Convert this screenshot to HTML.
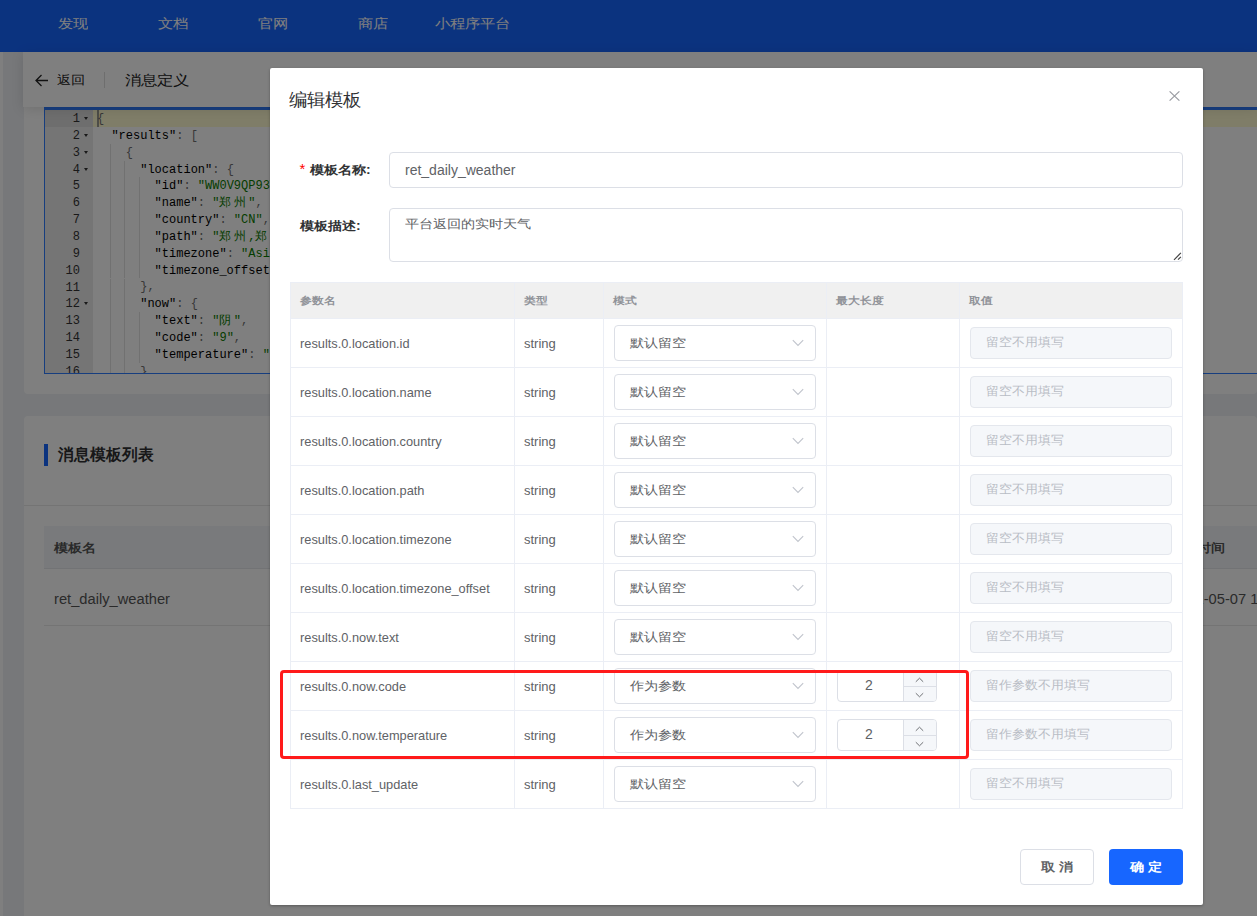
<!DOCTYPE html>
<html><head><meta charset="utf-8">
<style>
*{box-sizing:border-box;margin:0;padding:0}
html,body{width:1257px;height:916px;overflow:hidden}
body{position:relative;background:#eef0f4;font-family:"Liberation Sans",sans-serif;color:#333}
.abs{position:absolute;white-space:nowrap}
.c{display:inline-block;transform:scaleY(.85);font-weight:500}
#strip{left:0;top:52px;width:3px;height:864px;background:#fff}
#nav{left:0;top:0;width:1257px;height:52px;background:#1766ff}
#nav span{position:absolute;top:14px;font-size:15px;line-height:20px;color:#fff}
#hcard{left:23px;top:52px;width:1234px;height:55px;background:#fff;z-index:1;box-shadow:0 2px 12px rgba(0,0,0,.12)}
#hcard .t{position:absolute;line-height:20px;color:#222}
#ecard{left:24px;top:107px;width:1233px;height:287px;background:#fff;border-radius:0 0 4px 4px}
#editor{left:44px;top:107px;width:1213px;height:267px;border:1px solid #2f7cff;border-top-width:3px;border-right:none;background:#fff;overflow:hidden}
#gutter{left:0;top:0;width:48px;height:100%;background:#ebebeb}
.code{position:absolute;left:0;top:0;font-family:"Liberation Mono",monospace;font-size:12px;line-height:16.85px;white-space:pre;color:#000}
.ln{position:absolute;left:0;width:35px;text-align:right;font-family:"Liberation Mono",monospace;font-size:12px;line-height:16.85px;color:#333}
.fold{position:absolute;left:39px;width:0;height:0;border-left:2.7px solid transparent;border-right:2.7px solid transparent;border-top:3.3px solid #333}
.k{color:#000}.p{color:#707070}.s{color:#0a7a00}
.ig{position:absolute;width:1px;background:#e2e2e2}
#lcard{left:24px;top:416px;width:1233px;height:500px;background:#fff;border-radius:4px 4px 0 0}
#mask{left:0;top:0;width:1257px;height:916px;background:rgba(0,0,0,.5);z-index:2}
#modal{left:270px;top:68px;width:933px;height:837px;background:#fff;border-radius:2px;z-index:3;box-shadow:0 1px 3px rgba(0,0,0,.3)}
</style></head><body>
<div id="strip" class="abs"></div>
<div id="nav" class="abs"><span class="c" style="left:58px">发现</span><span class="c" style="left:158px">文档</span><span class="c" style="left:258px">官网</span><span class="c" style="left:358px">商店</span><span class="c" style="left:435px">小程序平台</span></div>
<div id="hcard" class="abs">
  <svg class="abs" style="left:12px;top:22px" width="14" height="13" viewBox="0 0 14 13"><path d="M13 6.5H1.5M6.5 1L1 6.5L6.5 12" fill="none" stroke="#222" stroke-width="1.3"/></svg>
  <span class="t c" style="left:34px;top:18px;font-size:14px">返回</span>
  <div class="abs" style="left:81px;top:20px;width:1px;height:16px;background:#ddd"></div>
  <span class="t c" style="left:102px;top:19px;font-size:16px">消息定义</span>
</div>
<div id="ecard" class="abs"></div>
<div id="editor" class="abs">
<div id="gutter" class="abs"></div>
<div class="abs" style="left:0;top:0;width:48px;height:16.85px;background:#dcdcdc"></div>
<div class="abs" style="left:48px;top:0;width:1200px;height:16.85px;background:#fffbd1"></div>
<div class="abs" style="left:52px;top:0;width:1.5px;height:16.85px;background:#9a9a90"></div>
<div class="ln" style="top:1.00px">1</div>
<div class="fold" style="top:7.00px"></div>
<div class="ln" style="top:17.85px">2</div>
<div class="fold" style="top:23.85px"></div>
<div class="ln" style="top:34.70px">3</div>
<div class="fold" style="top:40.70px"></div>
<div class="ln" style="top:51.55px">4</div>
<div class="fold" style="top:57.55px"></div>
<div class="ln" style="top:68.40px">5</div>
<div class="ln" style="top:85.25px">6</div>
<div class="ln" style="top:102.10px">7</div>
<div class="ln" style="top:118.95px">8</div>
<div class="ln" style="top:135.80px">9</div>
<div class="ln" style="top:152.65px">10</div>
<div class="ln" style="top:169.50px">11</div>
<div class="ln" style="top:186.35px">12</div>
<div class="fold" style="top:192.35px"></div>
<div class="ln" style="top:203.20px">13</div>
<div class="ln" style="top:220.05px">14</div>
<div class="ln" style="top:236.90px">15</div>
<div class="ln" style="top:253.75px">16</div>
<div class="ig" style="left:65.0px;top:33.70px;height:16.85px"></div>
<div class="ig" style="left:65.0px;top:50.55px;height:16.85px"></div>
<div class="ig" style="left:79.4px;top:50.55px;height:16.85px"></div>
<div class="ig" style="left:65.0px;top:67.40px;height:16.85px"></div>
<div class="ig" style="left:79.4px;top:67.40px;height:16.85px"></div>
<div class="ig" style="left:93.8px;top:67.40px;height:16.85px"></div>
<div class="ig" style="left:65.0px;top:84.25px;height:16.85px"></div>
<div class="ig" style="left:79.4px;top:84.25px;height:16.85px"></div>
<div class="ig" style="left:93.8px;top:84.25px;height:16.85px"></div>
<div class="ig" style="left:65.0px;top:101.10px;height:16.85px"></div>
<div class="ig" style="left:79.4px;top:101.10px;height:16.85px"></div>
<div class="ig" style="left:93.8px;top:101.10px;height:16.85px"></div>
<div class="ig" style="left:65.0px;top:117.95px;height:16.85px"></div>
<div class="ig" style="left:79.4px;top:117.95px;height:16.85px"></div>
<div class="ig" style="left:93.8px;top:117.95px;height:16.85px"></div>
<div class="ig" style="left:65.0px;top:134.80px;height:16.85px"></div>
<div class="ig" style="left:79.4px;top:134.80px;height:16.85px"></div>
<div class="ig" style="left:93.8px;top:134.80px;height:16.85px"></div>
<div class="ig" style="left:65.0px;top:151.65px;height:16.85px"></div>
<div class="ig" style="left:79.4px;top:151.65px;height:16.85px"></div>
<div class="ig" style="left:93.8px;top:151.65px;height:16.85px"></div>
<div class="ig" style="left:65.0px;top:168.50px;height:16.85px"></div>
<div class="ig" style="left:79.4px;top:168.50px;height:16.85px"></div>
<div class="ig" style="left:65.0px;top:185.35px;height:16.85px"></div>
<div class="ig" style="left:79.4px;top:185.35px;height:16.85px"></div>
<div class="ig" style="left:65.0px;top:202.20px;height:16.85px"></div>
<div class="ig" style="left:79.4px;top:202.20px;height:16.85px"></div>
<div class="ig" style="left:93.8px;top:202.20px;height:16.85px"></div>
<div class="ig" style="left:65.0px;top:219.05px;height:16.85px"></div>
<div class="ig" style="left:79.4px;top:219.05px;height:16.85px"></div>
<div class="ig" style="left:93.8px;top:219.05px;height:16.85px"></div>
<div class="ig" style="left:65.0px;top:235.90px;height:16.85px"></div>
<div class="ig" style="left:79.4px;top:235.90px;height:16.85px"></div>
<div class="ig" style="left:93.8px;top:235.90px;height:16.85px"></div>
<div class="ig" style="left:65.0px;top:252.75px;height:16.85px"></div>
<div class="ig" style="left:79.4px;top:252.75px;height:16.85px"></div>
<div class="code" style="left:52px;top:1px"><span class="p">{</span>
  <span class="k">&quot;results&quot;</span><span class="p">:</span> <span class="p">[</span>
    <span class="p">{</span>
      <span class="k">&quot;location&quot;</span><span class="p">:</span> <span class="p">{</span>
        <span class="k">&quot;id&quot;</span><span class="p">:</span> <span class="s">&quot;WW0V9QP93VTF&quot;</span><span class="p">,</span>
        <span class="k">&quot;name&quot;</span><span class="p">:</span> <span class="s">&quot;<span style="letter-spacing:2.4px">郑州</span>&quot;</span><span class="p">,</span>
        <span class="k">&quot;country&quot;</span><span class="p">:</span> <span class="s">&quot;CN&quot;</span><span class="p">,</span>
        <span class="k">&quot;path&quot;</span><span class="p">:</span> <span class="s">&quot;<span style="letter-spacing:2.4px">郑州</span>,<span style="letter-spacing:2.4px">郑州</span>,<span style="letter-spacing:2.4px">河南</span>,<span style="letter-spacing:2.4px">中国</span>&quot;</span><span class="p">,</span>
        <span class="k">&quot;timezone&quot;</span><span class="p">:</span> <span class="s">&quot;Asia/Shanghai&quot;</span><span class="p">,</span>
        <span class="k">&quot;timezone_offset&quot;</span><span class="p">:</span> <span class="s">&quot;+08:00&quot;</span>
      <span class="p">}</span><span class="p">,</span>
      <span class="k">&quot;now&quot;</span><span class="p">:</span> <span class="p">{</span>
        <span class="k">&quot;text&quot;</span><span class="p">:</span> <span class="s">&quot;<span style="letter-spacing:2.4px">阴</span>&quot;</span><span class="p">,</span>
        <span class="k">&quot;code&quot;</span><span class="p">:</span> <span class="s">&quot;9&quot;</span><span class="p">,</span>
        <span class="k">&quot;temperature&quot;</span><span class="p">:</span> <span class="s">&quot;20&quot;</span>
      <span class="p">}</span></div>
</div>
<div id="lcard" class="abs">
  <div class="abs" style="left:20px;top:28px;width:4px;height:22px;background:#1766ff"></div>
  <span class="abs c" style="left:34px;top:28px;font-size:16px;line-height:22px;font-weight:bold;color:#303133;transform:scaleY(1.02)">消息模板列表</span>
  <div class="abs" style="left:0;top:89px;width:1233px;height:1px;background:#e8e8e8"></div>
  <div class="abs" style="left:20px;top:110px;width:1213px;height:43px;background:#f3f5f9;border-bottom:1px solid #e5e7eb"></div>
  <span class="abs c" style="left:30px;top:122px;font-size:14px;line-height:20px;font-weight:bold;color:#555">模板名</span>
  <span class="abs" style="left:30px;top:173px;font-size:14.7px;line-height:20px;color:#555">ret_daily_weather</span>
  <div class="abs" style="left:20px;top:209px;width:1213px;height:1px;background:#e8e8e8"></div>
  <span class="abs c" style="left:1145px;top:122px;font-size:14px;line-height:20px;font-weight:bold;color:#555">更新时间</span>
  <span class="abs" style="left:1147px;top:173px;font-size:14.7px;line-height:20px;color:#555;white-space:nowrap">2021-05-07 12:00:00</span>
</div>
<div id="mask" class="abs"></div>
<div id="modal" class="abs">
<span class="abs c" style="left:19px;top:20px;font-size:18px;line-height:24px;color:#303133;transform:scaleY(.98)">编辑模板</span>
<svg class="abs" style="left:899px;top:23px" width="11" height="10" viewBox="0 0 11 10"><path d="M0.6 0.4L10.4 9.6M10.4 0.4L0.6 9.6" stroke="#9a9ca2" stroke-width="1.2"/></svg>
<span class="abs" style="left:29.5px;top:91px;font-size:15px;line-height:20px;color:#f00">*</span>
<span class="abs c" style="left:40px;top:92px;font-size:14px;line-height:20px;font-weight:bold;color:#303133">模板名称:</span>
<div class="abs" style="left:119px;top:84px;width:794px;height:36px;border:1px solid #dcdfe6;border-radius:4px"></div>
<span class="abs" style="left:135px;top:92px;font-size:14px;line-height:20px;color:#606266">ret_daily_weather</span>
<span class="abs c" style="left:30px;top:148px;font-size:14px;line-height:20px;font-weight:bold;color:#303133">模板描述:</span>
<div class="abs" style="left:119px;top:140px;width:794px;height:54px;border:1px solid #dcdfe6;border-radius:4px"></div>
<span class="abs c" style="left:135px;top:146px;font-size:14px;line-height:20px;color:#606266">平台返回的实时天气</span>
<svg class="abs" style="left:903px;top:184px" width="9" height="9" viewBox="0 0 9 9"><path d="M1 7.8L7.9 0.9M5 7.7L7.9 4.8" stroke="#444" stroke-width="1.2"/></svg>
<div class="abs" style="left:20px;top:214px;width:893px;height:36px;background:#f0f0f0"></div>
<div class="abs" style="left:20px;top:214px;width:893px;height:1px;background:#ebeef5"></div>
<div class="abs" style="left:20px;top:250px;width:893px;height:1px;background:#ebeef5"></div>
<div class="abs" style="left:20px;top:299px;width:893px;height:1px;background:#ebeef5"></div>
<div class="abs" style="left:20px;top:348px;width:893px;height:1px;background:#ebeef5"></div>
<div class="abs" style="left:20px;top:397px;width:893px;height:1px;background:#ebeef5"></div>
<div class="abs" style="left:20px;top:446px;width:893px;height:1px;background:#ebeef5"></div>
<div class="abs" style="left:20px;top:495px;width:893px;height:1px;background:#ebeef5"></div>
<div class="abs" style="left:20px;top:544px;width:893px;height:1px;background:#ebeef5"></div>
<div class="abs" style="left:20px;top:593px;width:893px;height:1px;background:#ebeef5"></div>
<div class="abs" style="left:20px;top:642px;width:893px;height:1px;background:#ebeef5"></div>
<div class="abs" style="left:20px;top:691px;width:893px;height:1px;background:#ebeef5"></div>
<div class="abs" style="left:20px;top:740px;width:893px;height:1px;background:#ebeef5"></div>
<div class="abs" style="left:20px;top:214px;width:1px;height:527px;background:#ebeef5"></div>
<div class="abs" style="left:244px;top:214px;width:1px;height:527px;background:#ebeef5"></div>
<div class="abs" style="left:333px;top:214px;width:1px;height:527px;background:#ebeef5"></div>
<div class="abs" style="left:556px;top:214px;width:1px;height:527px;background:#ebeef5"></div>
<div class="abs" style="left:689px;top:214px;width:1px;height:527px;background:#ebeef5"></div>
<div class="abs" style="left:912px;top:214px;width:1px;height:527px;background:#ebeef5"></div>
<span class="abs c" style="left:30px;top:225px;font-size:12px;line-height:16px;font-weight:bold;color:#909399">参数名</span>
<span class="abs c" style="left:254px;top:225px;font-size:12px;line-height:16px;font-weight:bold;color:#909399">类型</span>
<span class="abs c" style="left:343px;top:225px;font-size:12px;line-height:16px;font-weight:bold;color:#909399">模式</span>
<span class="abs c" style="left:566px;top:225px;font-size:12px;line-height:16px;font-weight:bold;color:#909399">最大长度</span>
<span class="abs c" style="left:699px;top:225px;font-size:12px;line-height:16px;font-weight:bold;color:#909399">取值</span>
<span class="abs" style="left:30px;top:267px;font-size:12.8px;line-height:18px;color:#606266">results.0.location.id</span>
<span class="abs" style="left:254px;top:267px;font-size:13px;line-height:18px;color:#606266">string</span>
<div class="abs" style="left:344px;top:257px;width:202px;height:36px;border:1px solid #dcdfe6;border-radius:4px;background:#fff"></div>
<span class="abs c" style="left:360px;top:265px;font-size:14px;line-height:20px;color:#606266">默认留空</span>
<svg class="abs" style="left:522px;top:271px" width="12" height="8" viewBox="0 0 12 8"><path d="M0.8 1.2L6 6.4L11.2 1.2" fill="none" stroke="#c0c4cc" stroke-width="1.1"/></svg>
<div class="abs" style="left:700px;top:259px;width:202px;height:32px;border:1px solid #e4e7ed;border-radius:4px;background:#f5f7fa"></div>
<span class="abs c" style="left:716px;top:264.8px;font-size:13px;line-height:18px;color:#b9bdc5;transform:scaleY(.93)">留空不用填写</span>
<span class="abs" style="left:30px;top:316px;font-size:12.8px;line-height:18px;color:#606266">results.0.location.name</span>
<span class="abs" style="left:254px;top:316px;font-size:13px;line-height:18px;color:#606266">string</span>
<div class="abs" style="left:344px;top:306px;width:202px;height:36px;border:1px solid #dcdfe6;border-radius:4px;background:#fff"></div>
<span class="abs c" style="left:360px;top:314px;font-size:14px;line-height:20px;color:#606266">默认留空</span>
<svg class="abs" style="left:522px;top:320px" width="12" height="8" viewBox="0 0 12 8"><path d="M0.8 1.2L6 6.4L11.2 1.2" fill="none" stroke="#c0c4cc" stroke-width="1.1"/></svg>
<div class="abs" style="left:700px;top:308px;width:202px;height:32px;border:1px solid #e4e7ed;border-radius:4px;background:#f5f7fa"></div>
<span class="abs c" style="left:716px;top:313.8px;font-size:13px;line-height:18px;color:#b9bdc5;transform:scaleY(.93)">留空不用填写</span>
<span class="abs" style="left:30px;top:365px;font-size:12.8px;line-height:18px;color:#606266">results.0.location.country</span>
<span class="abs" style="left:254px;top:365px;font-size:13px;line-height:18px;color:#606266">string</span>
<div class="abs" style="left:344px;top:355px;width:202px;height:36px;border:1px solid #dcdfe6;border-radius:4px;background:#fff"></div>
<span class="abs c" style="left:360px;top:363px;font-size:14px;line-height:20px;color:#606266">默认留空</span>
<svg class="abs" style="left:522px;top:369px" width="12" height="8" viewBox="0 0 12 8"><path d="M0.8 1.2L6 6.4L11.2 1.2" fill="none" stroke="#c0c4cc" stroke-width="1.1"/></svg>
<div class="abs" style="left:700px;top:357px;width:202px;height:32px;border:1px solid #e4e7ed;border-radius:4px;background:#f5f7fa"></div>
<span class="abs c" style="left:716px;top:362.8px;font-size:13px;line-height:18px;color:#b9bdc5;transform:scaleY(.93)">留空不用填写</span>
<span class="abs" style="left:30px;top:414px;font-size:12.8px;line-height:18px;color:#606266">results.0.location.path</span>
<span class="abs" style="left:254px;top:414px;font-size:13px;line-height:18px;color:#606266">string</span>
<div class="abs" style="left:344px;top:404px;width:202px;height:36px;border:1px solid #dcdfe6;border-radius:4px;background:#fff"></div>
<span class="abs c" style="left:360px;top:412px;font-size:14px;line-height:20px;color:#606266">默认留空</span>
<svg class="abs" style="left:522px;top:418px" width="12" height="8" viewBox="0 0 12 8"><path d="M0.8 1.2L6 6.4L11.2 1.2" fill="none" stroke="#c0c4cc" stroke-width="1.1"/></svg>
<div class="abs" style="left:700px;top:406px;width:202px;height:32px;border:1px solid #e4e7ed;border-radius:4px;background:#f5f7fa"></div>
<span class="abs c" style="left:716px;top:411.8px;font-size:13px;line-height:18px;color:#b9bdc5;transform:scaleY(.93)">留空不用填写</span>
<span class="abs" style="left:30px;top:463px;font-size:12.8px;line-height:18px;color:#606266">results.0.location.timezone</span>
<span class="abs" style="left:254px;top:463px;font-size:13px;line-height:18px;color:#606266">string</span>
<div class="abs" style="left:344px;top:453px;width:202px;height:36px;border:1px solid #dcdfe6;border-radius:4px;background:#fff"></div>
<span class="abs c" style="left:360px;top:461px;font-size:14px;line-height:20px;color:#606266">默认留空</span>
<svg class="abs" style="left:522px;top:467px" width="12" height="8" viewBox="0 0 12 8"><path d="M0.8 1.2L6 6.4L11.2 1.2" fill="none" stroke="#c0c4cc" stroke-width="1.1"/></svg>
<div class="abs" style="left:700px;top:455px;width:202px;height:32px;border:1px solid #e4e7ed;border-radius:4px;background:#f5f7fa"></div>
<span class="abs c" style="left:716px;top:460.8px;font-size:13px;line-height:18px;color:#b9bdc5;transform:scaleY(.93)">留空不用填写</span>
<span class="abs" style="left:30px;top:512px;font-size:12.8px;line-height:18px;color:#606266">results.0.location.timezone_offset</span>
<span class="abs" style="left:254px;top:512px;font-size:13px;line-height:18px;color:#606266">string</span>
<div class="abs" style="left:344px;top:502px;width:202px;height:36px;border:1px solid #dcdfe6;border-radius:4px;background:#fff"></div>
<span class="abs c" style="left:360px;top:510px;font-size:14px;line-height:20px;color:#606266">默认留空</span>
<svg class="abs" style="left:522px;top:516px" width="12" height="8" viewBox="0 0 12 8"><path d="M0.8 1.2L6 6.4L11.2 1.2" fill="none" stroke="#c0c4cc" stroke-width="1.1"/></svg>
<div class="abs" style="left:700px;top:504px;width:202px;height:32px;border:1px solid #e4e7ed;border-radius:4px;background:#f5f7fa"></div>
<span class="abs c" style="left:716px;top:509.8px;font-size:13px;line-height:18px;color:#b9bdc5;transform:scaleY(.93)">留空不用填写</span>
<span class="abs" style="left:30px;top:561px;font-size:12.8px;line-height:18px;color:#606266">results.0.now.text</span>
<span class="abs" style="left:254px;top:561px;font-size:13px;line-height:18px;color:#606266">string</span>
<div class="abs" style="left:344px;top:551px;width:202px;height:36px;border:1px solid #dcdfe6;border-radius:4px;background:#fff"></div>
<span class="abs c" style="left:360px;top:559px;font-size:14px;line-height:20px;color:#606266">默认留空</span>
<svg class="abs" style="left:522px;top:565px" width="12" height="8" viewBox="0 0 12 8"><path d="M0.8 1.2L6 6.4L11.2 1.2" fill="none" stroke="#c0c4cc" stroke-width="1.1"/></svg>
<div class="abs" style="left:700px;top:553px;width:202px;height:32px;border:1px solid #e4e7ed;border-radius:4px;background:#f5f7fa"></div>
<span class="abs c" style="left:716px;top:558.8px;font-size:13px;line-height:18px;color:#b9bdc5;transform:scaleY(.93)">留空不用填写</span>
<span class="abs" style="left:30px;top:610px;font-size:12.8px;line-height:18px;color:#606266">results.0.now.code</span>
<span class="abs" style="left:254px;top:610px;font-size:13px;line-height:18px;color:#606266">string</span>
<div class="abs" style="left:344px;top:600px;width:202px;height:36px;border:1px solid #dcdfe6;border-radius:4px;background:#fff"></div>
<span class="abs c" style="left:360px;top:608px;font-size:14px;line-height:20px;color:#606266">作为参数</span>
<svg class="abs" style="left:522px;top:614px" width="12" height="8" viewBox="0 0 12 8"><path d="M0.8 1.2L6 6.4L11.2 1.2" fill="none" stroke="#c0c4cc" stroke-width="1.1"/></svg>
<div class="abs" style="left:567px;top:602px;width:100px;height:32px;border:1px solid #dcdfe6;border-radius:4px;background:#fff;overflow:hidden"><div class="abs" style="left:65px;top:0;width:34px;height:30px;background:#f5f7fa;border-left:1px solid #dcdfe6"></div><div class="abs" style="left:65px;top:15px;width:34px;height:1px;background:#dcdfe6"></div><svg class="abs" style="left:76.5px;top:6px" width="9" height="6" viewBox="0 0 9 6"><path d="M0.8 4.8L4.5 1.2L8.2 4.8" fill="none" stroke="#606266" stroke-width="0.9"/></svg><svg class="abs" style="left:76.5px;top:20.5px" width="9" height="6" viewBox="0 0 9 6"><path d="M0.8 1.2L4.5 4.8L8.2 1.2" fill="none" stroke="#606266" stroke-width="0.9"/></svg><span class="abs" style="left:27px;top:4px;font-size:14px;line-height:20px;color:#606266">2</span></div>
<div class="abs" style="left:700px;top:602px;width:202px;height:32px;border:1px solid #e4e7ed;border-radius:4px;background:#f5f7fa"></div>
<span class="abs c" style="left:716px;top:607.8px;font-size:13px;line-height:18px;color:#b9bdc5;transform:scaleY(.93)">留作参数不用填写</span>
<span class="abs" style="left:30px;top:659px;font-size:12.8px;line-height:18px;color:#606266">results.0.now.temperature</span>
<span class="abs" style="left:254px;top:659px;font-size:13px;line-height:18px;color:#606266">string</span>
<div class="abs" style="left:344px;top:649px;width:202px;height:36px;border:1px solid #dcdfe6;border-radius:4px;background:#fff"></div>
<span class="abs c" style="left:360px;top:657px;font-size:14px;line-height:20px;color:#606266">作为参数</span>
<svg class="abs" style="left:522px;top:663px" width="12" height="8" viewBox="0 0 12 8"><path d="M0.8 1.2L6 6.4L11.2 1.2" fill="none" stroke="#c0c4cc" stroke-width="1.1"/></svg>
<div class="abs" style="left:567px;top:651px;width:100px;height:32px;border:1px solid #dcdfe6;border-radius:4px;background:#fff;overflow:hidden"><div class="abs" style="left:65px;top:0;width:34px;height:30px;background:#f5f7fa;border-left:1px solid #dcdfe6"></div><div class="abs" style="left:65px;top:15px;width:34px;height:1px;background:#dcdfe6"></div><svg class="abs" style="left:76.5px;top:6px" width="9" height="6" viewBox="0 0 9 6"><path d="M0.8 4.8L4.5 1.2L8.2 4.8" fill="none" stroke="#606266" stroke-width="0.9"/></svg><svg class="abs" style="left:76.5px;top:20.5px" width="9" height="6" viewBox="0 0 9 6"><path d="M0.8 1.2L4.5 4.8L8.2 1.2" fill="none" stroke="#606266" stroke-width="0.9"/></svg><span class="abs" style="left:27px;top:4px;font-size:14px;line-height:20px;color:#606266">2</span></div>
<div class="abs" style="left:700px;top:651px;width:202px;height:32px;border:1px solid #e4e7ed;border-radius:4px;background:#f5f7fa"></div>
<span class="abs c" style="left:716px;top:656.8px;font-size:13px;line-height:18px;color:#b9bdc5;transform:scaleY(.93)">留作参数不用填写</span>
<span class="abs" style="left:30px;top:708px;font-size:12.8px;line-height:18px;color:#606266">results.0.last_update</span>
<span class="abs" style="left:254px;top:708px;font-size:13px;line-height:18px;color:#606266">string</span>
<div class="abs" style="left:344px;top:698px;width:202px;height:36px;border:1px solid #dcdfe6;border-radius:4px;background:#fff"></div>
<span class="abs c" style="left:360px;top:706px;font-size:14px;line-height:20px;color:#606266">默认留空</span>
<svg class="abs" style="left:522px;top:712px" width="12" height="8" viewBox="0 0 12 8"><path d="M0.8 1.2L6 6.4L11.2 1.2" fill="none" stroke="#c0c4cc" stroke-width="1.1"/></svg>
<div class="abs" style="left:700px;top:700px;width:202px;height:32px;border:1px solid #e4e7ed;border-radius:4px;background:#f5f7fa"></div>
<span class="abs c" style="left:716px;top:705.8px;font-size:13px;line-height:18px;color:#b9bdc5;transform:scaleY(.93)">留空不用填写</span>
<div class="abs" style="left:10px;top:601.5px;width:689px;height:89px;border:3px solid #ff1a1a;border-radius:4px"></div>
<div class="abs" style="left:750px;top:781px;width:74px;height:36px;border:1px solid #dcdfe6;border-radius:4px;background:#fff"></div>
<span class="abs c" style="left:771px;top:789px;font-size:14px;line-height:20px;font-weight:bold;color:#606266;letter-spacing:4px">取消</span>
<div class="abs" style="left:839px;top:781px;width:74px;height:36px;border-radius:4px;background:#1766ff"></div>
<span class="abs c" style="left:860px;top:789px;font-size:14px;line-height:20px;font-weight:bold;color:#fff;letter-spacing:4px">确定</span>
</div>
</body></html>
